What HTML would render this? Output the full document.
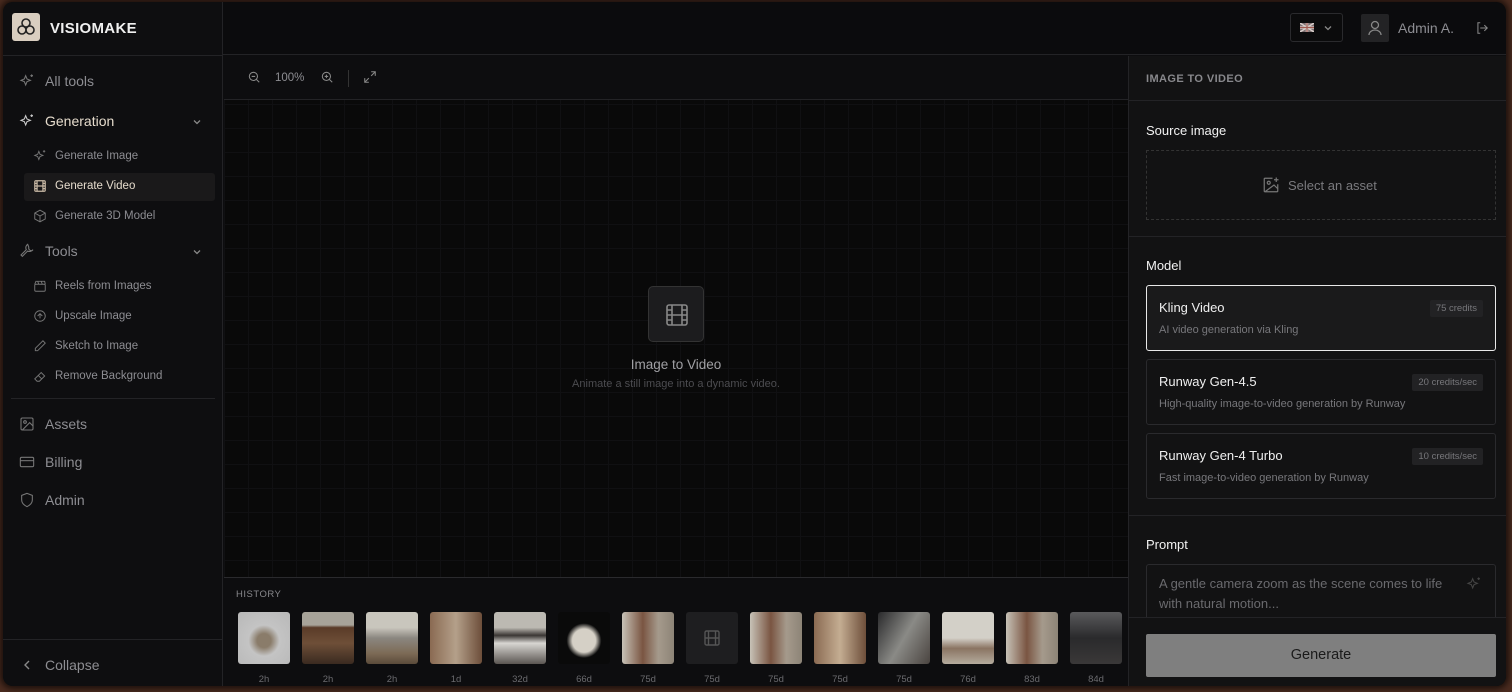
<!DOCTYPE html>
<html><head><meta charset="utf-8">
<style>
*{box-sizing:border-box;margin:0;padding:0}
body{width:1512px;height:692px;overflow:hidden;background:#4a2b1f;font-family:"Liberation Sans",sans-serif;color:#ddd;position:relative}
.frame{position:absolute;left:3px;top:2px;right:6px;bottom:6px;background:#0d0d0f;border-radius:10px;overflow:hidden;box-shadow:0 0 6px 3px rgba(0,0,0,.6)}
.abs{position:absolute}
.side{left:0;top:0;width:220px;bottom:0;border-right:1px solid #232326;background:#0e0e10}
.hdr{left:220px;top:0;right:0;height:53px;border-bottom:1px solid #232326;background:#0b0b0d}
.logo{left:9px;top:11px;width:28px;height:28px;border-radius:3px;background:#d9cec0}
.brand{left:47px;top:18px;font-weight:bold;font-size:15px;color:#f0f0f0;letter-spacing:.3px}
.sideline{left:0;top:53px;width:220px;height:1px;background:#232326}
.item{position:absolute;left:16px;font-size:14px;color:#8d8d92;display:flex;align-items:center;gap:10px}
.sub{position:absolute;left:30px;font-size:11.5px;color:#8d8d92;display:flex;align-items:center;gap:8px}
svg{flex:none}
.chev{position:absolute;left:188px}
.canvas{left:221px;top:54px;width:904px;height:521px;background:#090909;background-image:linear-gradient(#101012 1px,transparent 1px),linear-gradient(90deg,#101012 1px,transparent 1px);background-size:24px 24px}
.tb{left:221px;top:54px;width:904px;height:44px;border-bottom:1px solid #232326;background:#0d0d0f}
.hist{left:221px;top:575px;width:904px;bottom:0;border-top:1px solid #2a2a2d;background:#0d0d0f}
.th{position:absolute;top:34px;width:52px;height:52px;border-radius:3px}
.tl{position:absolute;top:96px;width:52px;text-align:center;font-size:9.5px;color:#6a6a6e}
.rp{left:1125px;top:54px;right:0;bottom:0;background:#121213;border-left:1px solid #232326}
.lbl{position:absolute;left:17px;font-size:13px;color:#f2f2f2}
.card{position:absolute;left:17px;width:350px;height:66px;border:1px solid #2a2a2d;border-radius:3px;background:#121213}
.card .t{position:absolute;left:12px;top:14px;font-size:13px;color:#f0f0f0}
.card .d{position:absolute;left:12px;top:38px;font-size:11px;color:#77777b}
.card .b{position:absolute;right:12px;top:14px;font-size:9.5px;color:#77777b;background:#222224;padding:3px 6px;border-radius:2px}
.hr{position:absolute;left:0;right:0;height:1px;background:#232326}
</style></head><body>
<div class="frame">
<div class="abs side"></div>
<div class="abs hdr"></div>
<div class="abs sideline"></div>
<div class="abs logo"><svg width="28" height="28" viewBox="0 0 28 28"><g fill="none" stroke="#222" stroke-width="1.6"><circle cx="14" cy="10" r="4"/><circle cx="10" cy="17" r="4"/><circle cx="18" cy="17" r="4"/></g></svg></div>
<div class="abs brand">VISIOMAKE</div>

<div class="item" style="top:71px"><svg width="16" height="16" viewBox="0 0 24 24" fill="none" stroke="#777" stroke-width="1.6"><path d="M10 4l2 5 5 2-5 2-2 5-2-5-5-2 5-2z"/><path d="M19 2v4M17 4h4"/></svg>All tools</div>
<div class="item" style="top:111px;color:#e6dccd"><svg width="16" height="16" viewBox="0 0 24 24" fill="none" stroke="#ccc" stroke-width="1.6"><path d="M10 4l2 5 5 2-5 2-2 5-2-5-5-2 5-2z"/><path d="M19 2v4M17 4h4"/></svg>Generation</div>
<svg class="chev" style="top:114px" width="12" height="12" viewBox="0 0 12 12" fill="none" stroke="#888" stroke-width="1.3"><path d="M3 4.5l3 3 3-3"/></svg>
<div class="sub" style="top:147px"><svg width="14" height="14" viewBox="0 0 24 24" fill="none" stroke="#777" stroke-width="1.6"><path d="M10 4l2 5 5 2-5 2-2 5-2-5-5-2 5-2z"/><path d="M19 2v4M17 4h4"/></svg>Generate Image</div>
<div class="abs" style="left:21px;top:171px;width:191px;height:28px;background:#1a191a;border-radius:3px"></div>
<div class="sub" style="top:177px;color:#e6dccd"><svg width="14" height="14" viewBox="0 0 24 24" fill="none" stroke="#c9b9a5" stroke-width="2"><rect x="3" y="3" width="18" height="18" rx="2"/><path d="M7 3v18M17 3v18M3 12h18M3 7.5h4M3 16.5h4M17 7.5h4M17 16.5h4"/></svg>Generate Video</div>
<div class="sub" style="top:207px"><svg width="14" height="14" viewBox="0 0 24 24" fill="none" stroke="#777" stroke-width="1.6"><path d="M12 2l9 5v10l-9 5-9-5V7z"/><path d="M3 7l9 5 9-5M12 12v10"/></svg>Generate 3D Model</div>
<div class="item" style="top:241px"><svg width="16" height="16" viewBox="0 0 24 24" fill="none" stroke="#777" stroke-width="1.6"><path d="M14.7 6.3a4 4 0 0 0 5 5L21 10a6 6 0 0 1-8 2l-8 8-2-2 8-8a6 6 0 0 1 2-8z"/></svg>Tools</div>
<svg class="chev" style="top:244px" width="12" height="12" viewBox="0 0 12 12" fill="none" stroke="#888" stroke-width="1.3"><path d="M3 4.5l3 3 3-3"/></svg>
<div class="sub" style="top:277px"><svg width="14" height="14" viewBox="0 0 24 24" fill="none" stroke="#777" stroke-width="1.6"><rect x="3" y="9" width="18" height="12" rx="2"/><path d="M3 9l2-5 15 0 1 5M8 4l2 5M14 4l2 5"/></svg>Reels from Images</div>
<div class="sub" style="top:307px"><svg width="14" height="14" viewBox="0 0 24 24" fill="none" stroke="#777" stroke-width="1.6"><circle cx="12" cy="12" r="9"/><path d="M12 16V8M8 12l4-4 4 4"/></svg>Upscale Image</div>
<div class="sub" style="top:337px"><svg width="14" height="14" viewBox="0 0 24 24" fill="none" stroke="#777" stroke-width="1.6"><path d="M17 3l4 4L8 20H4v-4z"/></svg>Sketch to Image</div>
<div class="sub" style="top:367px"><svg width="14" height="14" viewBox="0 0 24 24" fill="none" stroke="#777" stroke-width="1.6"><path d="M7 21L3 17 14 6l6 6-9 9zM9 11l6 6"/></svg>Remove Background</div>
<div class="abs" style="left:8px;top:396px;width:204px;height:1px;background:#232326"></div>
<div class="item" style="top:414px"><svg width="16" height="16" viewBox="0 0 24 24" fill="none" stroke="#777" stroke-width="1.6"><rect x="3" y="3" width="18" height="18" rx="2"/><circle cx="9" cy="9" r="2"/><path d="M21 15l-5-5L5 21"/></svg>Assets</div>
<div class="item" style="top:452px"><svg width="16" height="16" viewBox="0 0 24 24" fill="none" stroke="#777" stroke-width="1.6"><rect x="2" y="5" width="20" height="14" rx="2"/><path d="M2 10h20"/></svg>Billing</div>
<div class="item" style="top:490px"><svg width="16" height="16" viewBox="0 0 24 24" fill="none" stroke="#777" stroke-width="1.6"><path d="M12 2l8 3v7c0 5-4 8-8 10-4-2-8-5-8-10V5z"/></svg>Admin</div>
<div class="abs" style="left:0;top:637px;width:220px;height:1px;background:#232326"></div>
<div class="item" style="top:655px"><svg width="16" height="16" viewBox="0 0 16 16" fill="none" stroke="#888" stroke-width="1.4"><path d="M10 4l-4 4 4 4"/></svg>Collapse</div>

<!-- header right -->
<div class="abs" style="left:1287px;top:11px;width:53px;height:29px;border:1px solid #2a2a2d;border-radius:3px;background:#0b0b0c"></div>
<svg class="abs" style="left:1297px;top:21px" width="14" height="9" viewBox="0 0 14 9"><rect width="14" height="9" fill="#7d6e70"/><path d="M0 0l14 9M14 0L0 9" stroke="#d8d0cc" stroke-width="1.5"/><path d="M7 0v9M0 4.5h14" stroke="#d8d0cc" stroke-width="2.5"/><path d="M7 0v9M0 4.5h14" stroke="#a05a50" stroke-width="1.2"/></svg>
<svg class="abs" style="left:1319px;top:20px" width="12" height="12" viewBox="0 0 12 12" fill="none" stroke="#888" stroke-width="1.3"><path d="M3 4.5l3 3 3-3"/></svg>
<div class="abs" style="left:1358px;top:12px;width:28px;height:28px;background:#232325;border-radius:2px"><svg width="28" height="28" viewBox="0 0 28 28" fill="none" stroke="#888" stroke-width="1.3"><circle cx="14" cy="11" r="3.5"/><path d="M8 21c0-3 3-5 6-5s6 2 6 5"/></svg></div>
<div class="abs" style="left:1395px;top:18px;font-size:14px;color:#8d8d92">Admin A.</div>
<div class="abs" style="left:1472px;top:19px"><svg width="14" height="14" viewBox="0 0 24 24" fill="none" stroke="#888" stroke-width="1.8"><path d="M9 21H5V3h4M16 17l5-5-5-5M21 12H9"/></svg></div>

<!-- canvas -->
<div class="abs canvas"></div>
<div class="abs tb"></div>
<div class="abs" style="left:244px;top:68px"><svg width="14" height="14" viewBox="0 0 24 24" fill="none" stroke="#888" stroke-width="1.8"><circle cx="11" cy="11" r="7"/><path d="M21 21l-5-5M8 11h6"/></svg></div>
<div class="abs" style="left:272px;top:70px;font-size:11.5px;color:#8d8d92">100%</div>
<div class="abs" style="left:317px;top:68px"><svg width="14" height="14" viewBox="0 0 24 24" fill="none" stroke="#888" stroke-width="1.8"><circle cx="11" cy="11" r="7"/><path d="M21 21l-5-5M8 11h6M11 8v6"/></svg></div>
<div class="abs" style="left:345px;top:68px;width:1px;height:17px;background:#333"></div>
<div class="abs" style="left:360px;top:68px"><svg width="14" height="14" viewBox="0 0 24 24" fill="none" stroke="#888" stroke-width="1.8"><path d="M14 3h7v7M21 3l-7 7M10 21H3v-7M3 21l7-7"/></svg></div>
<div class="abs" style="left:645px;top:284px;width:56px;height:56px;border:1px solid #333;border-radius:5px;background:#1c1c1e"><svg width="56" height="56" viewBox="0 0 56 56" fill="none" stroke="#888" stroke-width="1.6"><rect x="18" y="18" width="20" height="20" rx="2"/><path d="M23 18v20M33 18v20M18 28h20M18 23h5M18 33h5M33 23h5M33 33h5"/></svg></div>
<div class="abs" style="left:421px;top:355px;width:504px;text-align:center;font-size:13.5px;color:#a0a0a4">Image to Video</div>
<div class="abs" style="left:421px;top:376px;width:504px;text-align:center;font-size:11px;color:#4c4c50">Animate a still image into a dynamic video.</div>

<!-- history -->
<div class="abs hist">
<div class="abs" style="left:12px;top:11px;font-size:9.5px;color:#88888c;letter-spacing:.5px">HISTORY</div>
<div class="th" style="left:14px;background:radial-gradient(circle at 50% 55%,#8a7c6a 0 18%,#c4c4c4 40%,#b8b8b8)"></div>
<div class="th" style="left:78px;background:linear-gradient(#a7a399 0 25%,#5a3b28 30%,#6e4f38 60%,#3a2a20)"></div>
<div class="th" style="left:142px;background:linear-gradient(#c9c6bd 0 30%,#8b8780 50%,#7c6a55 80%,#5a4a3a)"></div>
<div class="th" style="left:206px;background:linear-gradient(90deg,#8a6a52,#b4a08a 50%,#6d4e3a)"></div>
<div class="th" style="left:270px;background:linear-gradient(#bcb9b2 0 30%,#3a3634 45%,#d8d6d2 60%,#5b5652)"></div>
<div class="th" style="left:334px;background:radial-gradient(circle at 50% 55%,#d5d0c6 0 30%,#0a0a0a 45%)"></div>
<div class="th" style="left:398px;background:linear-gradient(90deg,#c7c2b7,#7a5542 40%,#a59a8c 70%,#8d8477)"></div>
<div class="th" style="left:462px;background:#1e1e20"><svg width="52" height="52" viewBox="0 0 52 52" fill="none" stroke="#555" stroke-width="1.4"><rect x="19" y="19" width="14" height="14" rx="1.5"/><path d="M22.5 19v14M29.5 19v14M19 26h14"/></svg></div>
<div class="th" style="left:526px;background:linear-gradient(90deg,#c7c2b7,#7a5542 40%,#a59a8c 70%,#8d8477)"></div>
<div class="th" style="left:590px;background:linear-gradient(90deg,#8a6a52,#c4ad92 50%,#6d4e3a)"></div>
<div class="th" style="left:654px;background:linear-gradient(120deg,#2a2a2c,#8a8a86 50%,#4a4440)"></div>
<div class="th" style="left:718px;background:linear-gradient(#d3d0c8 0 50%,#8a7462 70%,#b5ac9e)"></div>
<div class="th" style="left:782px;background:linear-gradient(90deg,#c7c2b7,#7a5542 40%,#a59a8c 70%,#8d8477)"></div>
<div class="th" style="left:846px;background:linear-gradient(#5a5a5c,#2a2a2c 50%,#3a3838)"></div>
<div class="tl" style="left:14px">2h</div><div class="tl" style="left:78px">2h</div><div class="tl" style="left:142px">2h</div><div class="tl" style="left:206px">1d</div><div class="tl" style="left:270px">32d</div><div class="tl" style="left:334px">66d</div><div class="tl" style="left:398px">75d</div><div class="tl" style="left:462px">75d</div><div class="tl" style="left:526px">75d</div><div class="tl" style="left:590px">75d</div><div class="tl" style="left:654px">75d</div><div class="tl" style="left:718px">76d</div><div class="tl" style="left:782px">83d</div><div class="tl" style="left:846px">84d</div>
</div>

<!-- right panel -->
<div class="abs rp">
<div class="abs" style="left:17px;top:17px;font-size:11px;color:#88888c;font-weight:bold;letter-spacing:.4px">IMAGE TO VIDEO</div>
<div class="hr" style="top:44px"></div>
<div class="lbl" style="top:67px">Source image</div>
<div class="abs" style="left:17px;top:94px;width:350px;height:70px;border:1px dashed #333"></div>
<div class="abs" style="left:133px;top:120px;display:flex;gap:8px;align-items:center;font-size:13px;color:#7a7a7e"><svg width="18" height="18" viewBox="0 0 24 24" fill="none" stroke="#777" stroke-width="1.6"><path d="M14 3H4a1 1 0 0 0-1 1v16a1 1 0 0 0 1 1h16a1 1 0 0 0 1-1V11"/><circle cx="9" cy="9" r="2"/><path d="M21 17l-5-5L4 21M19 2v6M16 5h6"/></svg>Select an asset</div>
<div class="hr" style="top:180px"></div>
<div class="lbl" style="top:202px">Model</div>
<div class="card" style="top:229px;border-color:#e8e8e8;background:#1a1a1b"><div class="t">Kling Video</div><div class="d">AI video generation via Kling</div><div class="b">75 credits</div></div>
<div class="card" style="top:303px"><div class="t">Runway Gen-4.5</div><div class="d">High-quality image-to-video generation by Runway</div><div class="b">20 credits/sec</div></div>
<div class="card" style="top:377px"><div class="t">Runway Gen-4 Turbo</div><div class="d">Fast image-to-video generation by Runway</div><div class="b">10 credits/sec</div></div>
<div class="hr" style="top:459px"></div>
<div class="lbl" style="top:481px">Prompt</div>
<div class="abs" style="left:17px;top:508px;width:350px;height:60px;border:1px solid #2a2a2d;border-radius:3px"></div>
<div class="abs" style="left:30px;top:518px;width:300px;font-size:13px;line-height:20px;color:#6a6a6e">A gentle camera zoom as the scene comes to life with natural motion...</div>
<div class="abs" style="left:337px;top:520px"><svg width="16" height="16" viewBox="0 0 24 24" fill="none" stroke="#444" stroke-width="1.6"><path d="M10 4l2 5 5 2-5 2-2 5-2-5-5-2 5-2z"/><path d="M19 2v4M17 4h4"/></svg></div>
<div class="abs" style="left:0;right:0;top:561px;bottom:0;background:#121213;border-top:1px solid #232326"></div>
<div class="abs" style="left:17px;top:578px;width:350px;height:43px;background:#7f7f7f;border-radius:2px;text-align:center;line-height:43px;font-size:14.5px;color:#1a1a1a">Generate</div>
</div>
</div>
</body></html>
